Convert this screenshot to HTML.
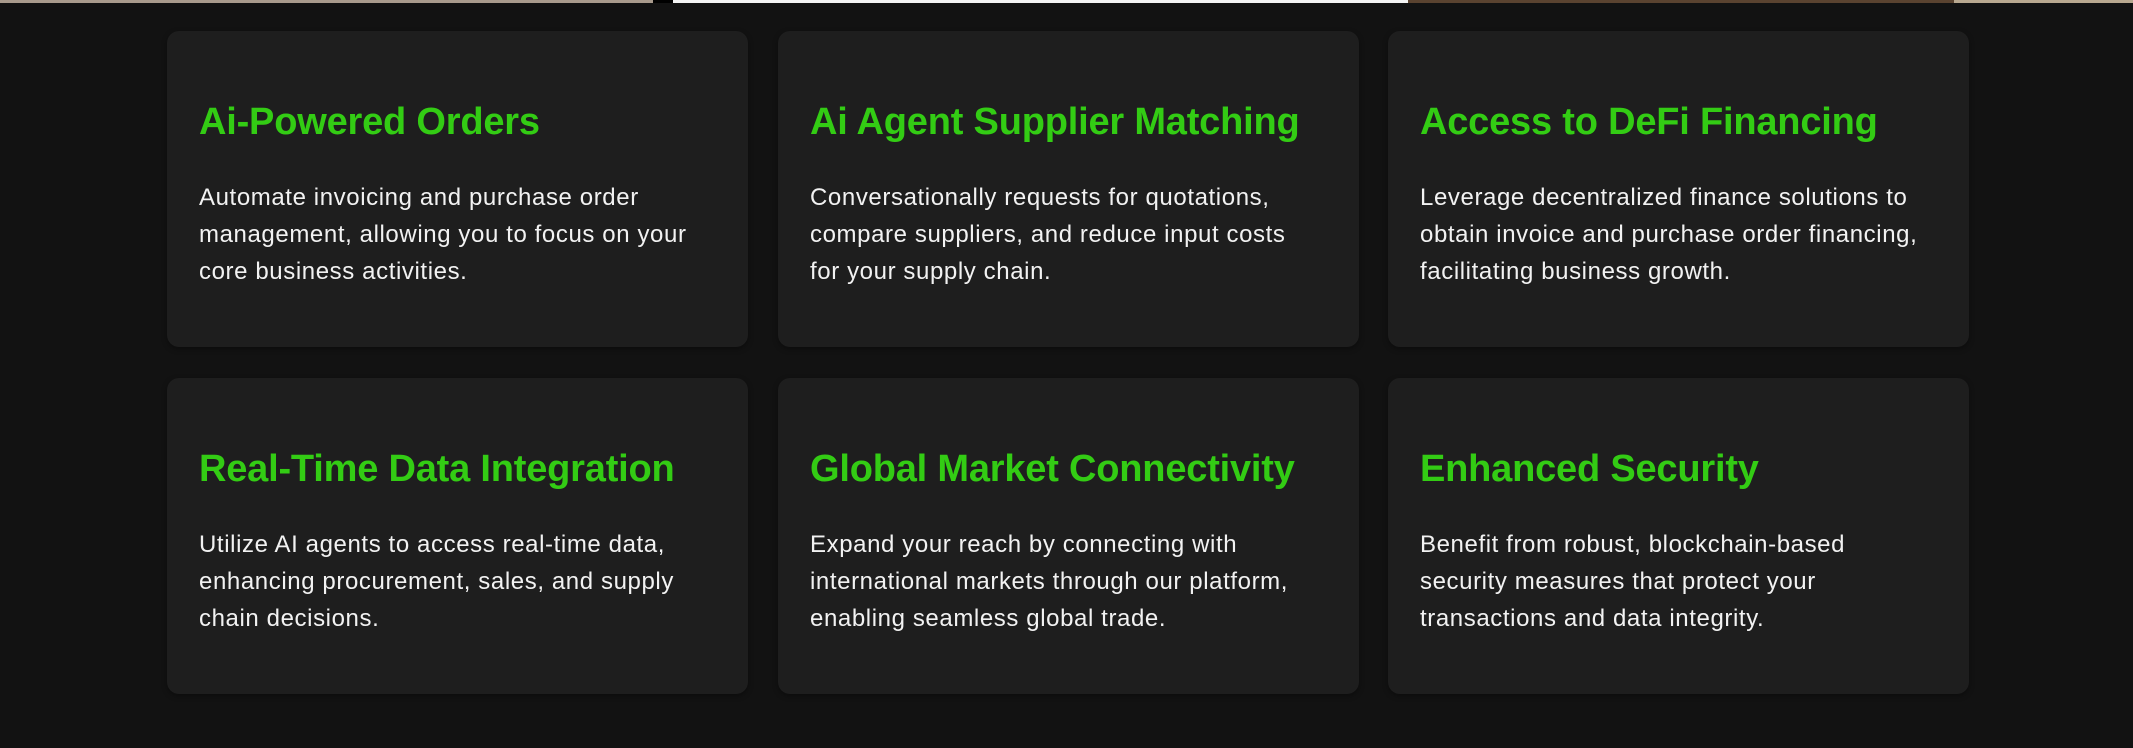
<!DOCTYPE html>
<html><head><meta charset="utf-8"><style>
html,body{margin:0;padding:0;width:2133px;height:748px;background:#121212;overflow:hidden;font-family:"Liberation Sans",sans-serif}
.strip{position:absolute;top:0;height:3px}
.card{position:absolute;width:581px;height:316px;background:#1e1e1e;border-radius:12px;box-shadow:0 2px 6px rgba(0,0,0,.35);box-sizing:border-box}
.card h3{margin:0;position:absolute;left:32px;top:70px;font-size:38px;font-weight:bold;color:#33cc14;letter-spacing:-0.2px;white-space:nowrap}
.card p{margin:0;position:absolute;left:32px;top:148px;font-size:24px;line-height:37px;color:#f2f2f2;white-space:nowrap;letter-spacing:0.6px}
</style></head><body>
<div class="strip" style="left:0;width:653px;background:#a89a8c"></div>
<div class="strip" style="left:653px;width:20px;background:#000"></div>
<div class="strip" style="left:673px;width:735px;background:#f4f4f4"></div>
<div class="strip" style="left:1408px;width:546px;background:#5a4330"></div>
<div class="strip" style="left:1954px;width:179px;background:#b8a890"></div>

<div class="card" style="left:167px;top:31px"><h3>Ai-Powered Orders</h3><p>Automate invoicing and purchase order<br>management, allowing you to focus on your<br>core business activities.</p></div>
<div class="card" style="left:778px;top:31px"><h3>Ai Agent Supplier Matching</h3><p>Conversationally requests for quotations,<br>compare suppliers, and reduce input costs<br>for your supply chain.</p></div>
<div class="card" style="left:1388px;top:31px"><h3>Access to DeFi Financing</h3><p>Leverage decentralized finance solutions to<br>obtain invoice and purchase order financing,<br>facilitating business growth.</p></div>
<div class="card" style="left:167px;top:378px"><h3>Real-Time Data Integration</h3><p>Utilize AI agents to access real-time data,<br>enhancing procurement, sales, and supply<br>chain decisions.</p></div>
<div class="card" style="left:778px;top:378px"><h3>Global Market Connectivity</h3><p>Expand your reach by connecting with<br>international markets through our platform,<br>enabling seamless global trade.</p></div>
<div class="card" style="left:1388px;top:378px"><h3>Enhanced Security</h3><p>Benefit from robust, blockchain-based<br>security measures that protect your<br>transactions and data integrity.</p></div>
</body></html>
